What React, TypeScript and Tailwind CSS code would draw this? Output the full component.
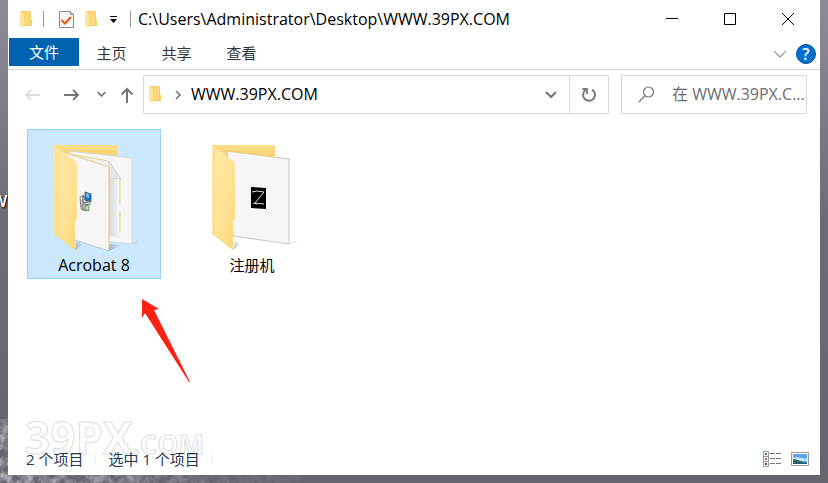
import { useState } from 'react'

const folders = [
  { name: 'Acrobat 8', kind: 'docs' },
  { name: '注册机', kind: 'keygen' },
]

const tabs = ['主页', '共享', '查看']

function SmallFolder() {
  return (
    <svg width="12" height="17" viewBox="0 0 12 17" className="shrink-0">
      <path d="M1 0h9l1 1v7l1 1v6H4z" fill="#f3cf68" />
      <path d="M0 0l4 3v14l-4-2z" fill="#ffe59a" />
      <path d="M4 3l1-2h5v13H4z" fill="#f9d87a" />
    </svg>
  )
}

function CheckedDoc() {
  return (
    <svg width="15" height="19" viewBox="0 0 15 19" className="shrink-0">
      <path d="M.5 1.500h11l3 3v13H.5z" fill="#f7f7f7" stroke="#8a8a8a" />
      <path d="M11.500 1.500v3h3" fill="#ddd" stroke="#8a8a8a" />
      <path d="M2.500 10l3.500 3.500 6-6.500" fill="none" stroke="#e8590c" strokeWidth="2" />
    </svg>
  )
}

function FolderPicture({ kind }: { kind: string }) {
  return (
    <svg viewBox="1 1 132 124" className="block h-[124px] w-full">
      <defs>
        <linearGradient id={`flap-${kind}`} x1="0" y1="0" x2="1" y2="1">
          <stop offset="0" stopColor="#ffe8a6" />
          <stop offset="0.6" stopColor="#ffe294" />
          <stop offset="1" stopColor="#f9d775" />
        </linearGradient>
        <linearGradient id={`shade-${kind}`} x1="0" y1="0" x2="1" y2="0">
          <stop offset="0" stopColor="#666" stopOpacity="0.4" />
          <stop offset="1" stopColor="#666" stopOpacity="0" />
        </linearGradient>
        <linearGradient id={`inner-${kind}`} x1="0" y1="0" x2="1" y2="0">
          <stop offset="0" stopColor="#d4d9de" />
          <stop offset="1" stopColor="#f5f7f9" />
        </linearGradient>
      </defs>
      <path d="M104 115l10-5-4 4-10 2z" fill={`url(#shade-${kind})`} />
      <path d="M48 121l8-5-6-4z" fill={`url(#shade-${kind})`} />
      <path d="M27 16h62l1 1v60H45z" fill="#f7d679" />
      <path d="M27 16h62l1 1v4H36z" fill="#fbdd85" />
      {kind === 'docs' ? (
        <>
          <path d="M42 22l63 7v86l-40-4z" fill="#f6f6f6" stroke="#d0d3d6" strokeWidth="0.8" />
          <path d="M38 24l43 8 12 18v58l-17 1z" fill="#eef1f4" />
          <path d="M38 24l43 8M93 50v24M93 82v21" fill="none" stroke="#f1d37e" />
          <path d="M82 32l12 18H82z" fill="#e4e6e8" stroke="#c2c5c8" strokeWidth="0.7" />
          <path d="M82 50h10v57H82z" fill={`url(#inner-${kind})`} />
          <path d="M82 122l13-6-13-1z" fill={`url(#shade-${kind})`} />
          <path d="M36 23l46 15v84l-34-11z" fill="#f6f6f6" stroke="#bdbfc1" strokeWidth="0.8" />
          <path d="M36 23l46 15v80" fill="none" stroke="#f5dc92" strokeWidth="1" />
          <path d="M53 68l3-2v15l-2-1z" fill="#eee" stroke="#666" strokeWidth="0.8" />
          <path d="M56 67l4 2v13l-4-1z" fill="#ccc" stroke="#555" strokeWidth="0.8" />
          <path d="M56 70l4 1M56 73l4 1M54 71v7M58 75v6" stroke="#888" strokeWidth="0.8" />
          <path d="M58 63l6 2v8l-6-2z" fill="#1672d2" stroke="#555" strokeWidth="0.8" />
          <path d="M59 64l3 1v4l-3-1z" fill="#5cc4ff" />
          <path d="M58 73l5 1v2l-5-1z" fill="#ddd" stroke="#555" strokeWidth="0.6" />
          <path d="M59 76l3 1v5l-3-1z" fill="#a9d5c4" stroke="#668c7e" strokeWidth="0.8" />
          <circle cx="60" cy="79" r="1" fill="#f5e972" />
        </>
      ) : (
        <>
          <path d="M42 22l62 8v85l-56-8z" fill="#f6f6f6" stroke="#bfbfbf" strokeWidth="0.9" />
          <path d="M42 22l48 6" stroke="#f7d679" strokeWidth="1" />
          <path d="M66 58l15 1v21l-15-1z" fill="#000" />
          <path d="M67 63l5-1 7 1-9 11 9 1M68 74l4 1" fill="none" stroke="#ddd" strokeWidth="1" />
        </>
      )}
      <path d="M27 16l20 15q3 2 3 5v54l-2 2v29L27 105z" fill={`url(#flap-${kind})`} />
      <path d="M29 19v86M27 104l21 16" fill="none" stroke="#efcf7b" strokeWidth="0.8" opacity="0.7" />
    </svg>
  )
}

function Backdrop() {
  return (
    <svg className="absolute inset-0 h-full w-full" aria-hidden="true">
      <defs>
        <filter id="grain">
          <feTurbulence type="fractalNoise" baseFrequency="0.12" numOctaves="4" seed="4" />
          <feColorMatrix values="0 0 0 0 0.75  0 0 0 0 0.75  0 0 0 0 0.78  1.5 0 0 0 -0.5" />
        </filter>
        <linearGradient id="sky" x1="0" y1="0" x2="0" y2="1">
          <stop offset="0" stopColor="#8d8b99" />
          <stop offset="0.45" stopColor="#6d6c76" />
          <stop offset="1" stopColor="#65646e" />
        </linearGradient>
        <radialGradient id="fade" cx="0" cy="1" r="0.4">
          <stop offset="0" stopColor="#fff" />
          <stop offset="1" stopColor="#000" />
        </radialGradient>
        <mask id="corner"><rect width="100%" height="100%" fill="url(#fade)" /></mask>
      </defs>
      <rect width="100%" height="100%" fill="url(#sky)" />
      <g mask="url(#corner)"><rect y="88%" width="100%" height="12%" filter="url(#grain)" /></g>
    </svg>
  )
}

function App() {
  const [selected, setSelected] = useState('Acrobat 8')

  return (
    <div className="relative h-screen overflow-hidden px-2 pb-2 font-['Open_Sans','Noto_Sans_CJK_SC',sans-serif] text-[15px] leading-5 text-black">
      <Backdrop />
      <span className="absolute top-[189px] -left-2 text-base font-semibold text-white [text-shadow:1px_1px_2px_#000]">W</span>
      <div className="relative flex h-full flex-col bg-white">
        <header className="flex h-[38px] shrink-0 items-center pl-3">
          <SmallFolder />
          <span className="ml-[11px] h-4 w-px bg-[#999]" />
          <button className="ml-[15px]" aria-label="属性"><CheckedDoc /></button>
          <button className="ml-[11px]" aria-label="新建文件夹"><SmallFolder /></button>
          <button className="ml-3" aria-label="自定义快速访问工具栏">
            <svg width="9" height="8" viewBox="0 0 9 8"><path d="M1 1.500h7" stroke="#000" /><path d="M1 4h7L4.500 8z" /></svg>
          </button>
          <span className="ml-3 h-4 w-px bg-[#999]" />
          <h1 className="ml-[7px] min-w-0 flex-1 truncate text-base leading-5">C:\Users\Administrator\Desktop\WWW.39PX.COM</h1>
          <button className="flex h-full w-[58px] items-center justify-center" aria-label="最小化">
            <svg width="12" height="12"><path d="M0 5.500h12" stroke="#000" /></svg>
          </button>
          <button className="flex h-full w-[58px] items-center justify-center" aria-label="最大化">
            <svg width="12" height="12"><path d="M.5.5h11v11H.5z" fill="none" stroke="#000" /></svg>
          </button>
          <button className="mr-[3px] flex h-full w-[58px] items-center justify-center" aria-label="关闭">
            <svg width="12" height="12"><path d="M0 0l12 12M12 0L0 12" stroke="#000" /></svg>
          </button>
        </header>

        <nav className="flex h-8 shrink-0 items-stretch border-b border-[#d9d9d9]">
          <button className="mb-[3px] ml-px w-[70px] bg-[#0063b1] text-white">文件</button>
          <div className="flex flex-1 pb-0.5 text-[#333]">
            {tabs.map((tab) => (
              <button key={tab} className="w-[65px]">{tab}</button>
            ))}
          </div>
          <button aria-label="展开功能区">
            <svg width="14" height="8" viewBox="0 0 14 8"><path d="M1 1l6 6 6-6" fill="none" stroke="#a0a0a0" strokeWidth="1.300" /></svg>
          </button>
          <button className="mr-1 ml-[9px] h-5 w-5 self-center rounded-full border border-[#00529c] bg-[#006fd0] text-base leading-[18px] font-semibold text-white" aria-label="帮助">?</button>
        </nav>

        <div className="flex h-[49px] shrink-0 items-center pr-[13px] pl-4">
          <button aria-label="后退" disabled>
            <svg width="17" height="14" viewBox="0 0 17 14"><path d="M16 7H2M7 2L2 7l5 5" fill="none" stroke="#dcdcdc" strokeWidth="1.800" /></svg>
          </button>
          <button className="ml-[22px]" aria-label="前进">
            <svg width="17" height="14" viewBox="0 0 17 14"><path d="M1 7h14M10 2l5 5-5 5" fill="none" stroke="#777" strokeWidth="1.800" /></svg>
          </button>
          <button className="ml-[17px]" aria-label="最近浏览的位置">
            <svg width="9" height="7" viewBox="0 0 9 7"><path d="M.7 1l3.800 4 3.800-4" fill="none" stroke="#777" strokeWidth="1.800" /></svg>
          </button>
          <button className="ml-3.5" aria-label="向上">
            <svg width="14" height="16" viewBox="0 0 14 16"><path d="M7 16V2M1.500 7.500L7 2l5.500 5.500" fill="none" stroke="#777" strokeWidth="2" /></svg>
          </button>
          <div className="ml-[9px] flex h-[39px] flex-1 items-center border border-[#d9d9d9] pl-[5px]">
            <SmallFolder />
            <svg width="6" height="10" viewBox="0 0 6 10" className="ml-3.5"><path d="M1 1l4 4-4 4" fill="none" stroke="#777" strokeWidth="1.600" /></svg>
            <input className="ml-2.5 min-w-0 flex-1 pb-0.5 text-base leading-5 outline-none" aria-label="地址" defaultValue="WWW.39PX.COM" />
            <button className="flex h-full w-[37px] items-center justify-center" aria-label="以前的位置">
              <svg width="12" height="8" viewBox="0 0 12 8"><path d="M1 1l5 5 5-5" fill="none" stroke="#777" strokeWidth="2" /></svg>
            </button>
            <button className="flex h-full w-[39px] items-center justify-center border-l border-[#d9d9d9]" aria-label="刷新">
              <svg width="16" height="16" viewBox="0 0 16 16">
                <path d="M11 2.600A6 6 0 1 1 4.500 3" fill="none" stroke="#777" strokeWidth="2" />
                <path d="M1.500 2h4.500v5" fill="none" stroke="#777" strokeWidth="1.800" />
              </svg>
            </button>
          </div>
          <div className="ml-3 flex h-[39px] w-[186px] items-center border border-[#d9d9d9] pl-4">
            <svg width="18" height="17" viewBox="0 0 18 17" className="shrink-0"><circle cx="10.500" cy="6" r="5" fill="none" stroke="#777" strokeWidth="1.200" /><path d="M7 9.500L1 16" stroke="#777" strokeWidth="1.200" /></svg>
            <input className="ml-4 min-w-0 flex-1 pb-0.5 text-base leading-5 outline-none placeholder:text-[#6d6d6d]" type="text" aria-label="搜索" placeholder="在 WWW.39PX.C..." />
          </div>
        </div>

        <main className="relative flex flex-1 items-start gap-6 pt-2.5 pl-[19px]">
          {folders.map(({ name, kind }) => (
            <button
              key={name}
              onClick={() => setSelected(name)}
              className={`w-[134px] border ${selected === name ? 'border-[#99d1ff] bg-[#cce8ff]' : 'border-transparent'}`}
            >
              <FolderPicture kind={kind} />
              <span className={`block pb-0.5 leading-[22px] ${kind === 'docs' ? 'text-base leading-[22px]' : ''}`}>{name}</span>
            </button>
          ))}
          <svg width="48" height="84" viewBox="0 0 48 84" className="absolute top-[180px] left-[134px]" aria-hidden="true">
            <path d="M0 0l17 10-5 1 36 72h-1L3 14l-3 5z" fill="#ff2014" />
          </svg>
          <div className="absolute bottom-[-31px] left-[17px] text-[44px] leading-[60px] font-bold text-white [-webkit-text-stroke:1px_#dedede]" aria-hidden="true">
            39PX<span className="text-[27px]">.COM</span>
          </div>
        </main>

        <footer className="relative flex h-8 shrink-0 items-center pr-[11px] pl-[18px] text-[#1e395b]">
          <span>2 个项目</span>
          <span className="mx-3 h-3 w-px bg-[#f0f0f0]" />
          <span>选中 1 个项目</span>
          <span className="ml-3 h-3 w-px bg-[#f0f0f0]" />
          <button className="ml-auto" aria-label="详细信息">
            <svg width="18" height="16" viewBox="0 0 18 16">
              <path d="M.5.5h5v5h-5zM.5 5.500h5v5h-5zM.5 10.500h5v5h-5z" fill="#fff" stroke="#999" />
              <path d="M7 2.500h5M13 2.500h5M7 7.500h5M13 7.500h5M7 12.500h5M13 12.500h5" stroke="#777" />
              <path d="M2 2h2v2H2z" fill="#3b78a8" />
              <path d="M2 7h2v2H2z" fill="#93783c" />
              <path d="M2 12h2v2H2z" fill="#a82828" />
            </svg>
          </button>
          <button className="ml-2.5" aria-label="大图标">
            <svg width="18" height="14" viewBox="0 0 18 14">
              <path d="M.5.5h17v13H.5z" fill="#fff" stroke="#999" />
              <path d="M2 2h14v10H2z" fill="#5da5ee" />
              <path d="M2 6l4-1 4 1 6 1v2H2z" fill="#c2e4f8" />
              <path d="M2 7l5 1 5 2 4 1v1H2z" fill="#2e6858" />
              <path d="M2 11h14v1H2z" fill="#205a94" />
            </svg>
          </button>
        </footer>
      </div>
    </div>
  )
}

export default App
